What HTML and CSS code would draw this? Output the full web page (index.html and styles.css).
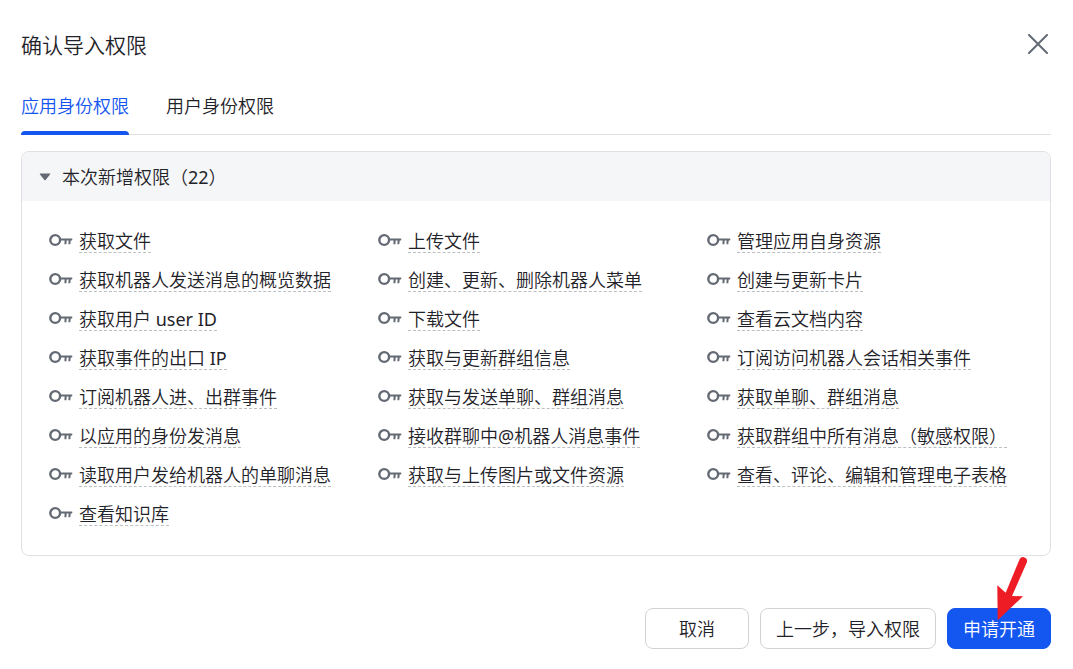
FILE: index.html
```html
<!DOCTYPE html>
<html lang="zh-CN">
<head>
    <meta charset="UTF-8">
    <meta name="viewport" content="width=device-width, initial-scale=1.0">
    <title>确认导入权限</title>
    <link rel="stylesheet" href="styles.css">
</head>
<body>
    <svg class="sprite" aria-hidden="true">
        <symbol id="key" viewBox="0 0 24 14">
            <circle cx="6.2" cy="7" r="4.9" fill="none" stroke="currentColor" stroke-width="2.4"/>
            <path d="M11 5.4H22.6Q23.6 5.4 23.4 6.3L23 7.6H21.7L21.3 11.2H19.4L19.6 7.6H17.7L17.4 11.2H15.4L15.6 7.6H11Z" fill="currentColor"/>
        </symbol>
    </svg>

    <main class="dialog">
        <header class="dialog-header">
            <h1>确认导入权限</h1>
            <button type="button" class="close" aria-label="关闭">
                <svg width="20" height="20" viewBox="0 0 20 20"><path d="M1 1L19 19M19 1L1 19" stroke="currentColor" stroke-width="2" stroke-linecap="round"/></svg>
            </button>
        </header>

        <div class="tabs" role="tablist">
            <button type="button" class="tab active" role="tab" aria-selected="true">应用身份权限</button>
            <button type="button" class="tab" role="tab" aria-selected="false">用户身份权限</button>
        </div>

        <section class="panel">
            <button type="button" class="panel-header" aria-expanded="true">
                <svg width="12" height="8" viewBox="0 0 12 8"><path d="M1.2 .5H10.8Q11.6 .7 11 1.4L6.6 7Q6 7.6 5.4 7L1 1.4Q.4 .7 1.2 .5Z" fill="currentColor"/></svg>
                <span>本次新增权限（<span class="latin">22</span>）</span>
            </button>
            <ul class="scopes">
                <li><svg class="key"><use href="#key"/></svg><span class="name">获取文件</span></li>
                <li><svg class="key"><use href="#key"/></svg><span class="name">上传文件</span></li>
                <li><svg class="key"><use href="#key"/></svg><span class="name">管理应用自身资源</span></li>
                <li><svg class="key"><use href="#key"/></svg><span class="name">获取机器人发送消息的概览数据</span></li>
                <li><svg class="key"><use href="#key"/></svg><span class="name">创建、更新、删除机器人菜单</span></li>
                <li><svg class="key"><use href="#key"/></svg><span class="name">创建与更新卡片</span></li>
                <li><svg class="key"><use href="#key"/></svg><span class="name">获取用户 <span class="latin">user ID</span></span></li>
                <li><svg class="key"><use href="#key"/></svg><span class="name">下载文件</span></li>
                <li><svg class="key"><use href="#key"/></svg><span class="name">查看云文档内容</span></li>
                <li><svg class="key"><use href="#key"/></svg><span class="name">获取事件的出口 <span class="latin">IP</span></span></li>
                <li><svg class="key"><use href="#key"/></svg><span class="name">获取与更新群组信息</span></li>
                <li><svg class="key"><use href="#key"/></svg><span class="name">订阅访问机器人会话相关事件</span></li>
                <li><svg class="key"><use href="#key"/></svg><span class="name">订阅机器人进、出群事件</span></li>
                <li><svg class="key"><use href="#key"/></svg><span class="name">获取与发送单聊、群组消息</span></li>
                <li><svg class="key"><use href="#key"/></svg><span class="name">获取单聊、群组消息</span></li>
                <li><svg class="key"><use href="#key"/></svg><span class="name">以应用的身份发消息</span></li>
                <li><svg class="key"><use href="#key"/></svg><span class="name">接收群聊中<span class="latin">@</span>机器人消息事件</span></li>
                <li><svg class="key"><use href="#key"/></svg><span class="name">获取群组中所有消息（敏感权限）</span></li>
                <li><svg class="key"><use href="#key"/></svg><span class="name">读取用户发给机器人的单聊消息</span></li>
                <li><svg class="key"><use href="#key"/></svg><span class="name">获取与上传图片或文件资源</span></li>
                <li><svg class="key"><use href="#key"/></svg><span class="name">查看、评论、编辑和管理电子表格</span></li>
                <li><svg class="key"><use href="#key"/></svg><span class="name">查看知识库</span></li>
            </ul>
        </section>

        <footer class="dialog-footer">
            <button type="button" class="btn">取消</button>
            <button type="button" class="btn">上一步，导入权限</button>
            <div class="submit">
                <button type="button" class="btn primary">申请开通</button>
                <svg class="pointer" viewBox="0 0 34 68" aria-hidden="true"><path d="M24.7 4A4 4 0 0 1 32 7L17 41L28 41.3L2.7 65.3L2.3 30.3L10.7 37.7Z" fill="#ee1c25"/></svg>
            </div>
        </footer>
    </main>
</body>
</html>
```
FILE: styles.css
```css
* {
    box-sizing: border-box;
}
body {
    margin: 0;
    background: #fff;
    color: #1f2329;
    font-family: "Noto Sans", "Noto Sans CJK SC", sans-serif;
    font-size: 18px;
    font-weight: 350;
    line-height: 24px;
}
button {
    padding: 0;
    border: none;
    background: none;
    color: inherit;
    font: inherit;
    cursor: pointer;
}
svg {
    display: block;
    flex: none;
}
.sprite {
    position: absolute;
    width: 0;
    height: 0;
}
/* latin letters look too thin next to the chinese ones */
.latin {
    font-weight: 400;
}
.dialog {
    padding: 29px 22px 20px 21px;
}
.dialog-header {
    display: flex;
    justify-content: space-between;
    align-items: flex-start;
}
h1 {
    margin: 0;
    font-size: 21px;
    font-weight: 350;
    line-height: 32px;
}
.close {
    padding: 5px 3px;
    color: #646a73;
}
.tabs {
    display: flex;
    align-items: flex-start;
    gap: 37px;
    margin-top: 33px;
    border-bottom: 1px solid #dee0e3;
}
.tab.active {
    margin-bottom: -1px;
    color: #1456f0;
}
.tab.active::after {
    content: "";
    display: block;
    height: 4px;
    margin-top: 13px;
    border-radius: 4px 4px 0 0;
    background: #1456f0;
}
.panel {
    margin-top: 16px;
    border: 1px solid #dee0e3;
    border-radius: 8px;
    overflow: hidden;
}
.panel-header {
    display: flex;
    align-items: center;
    gap: 11px;
    width: 100%;
    height: 49px;
    padding: 0 17px;
    background: #f5f6f7;
}
.panel-header svg {
    color: #646a73;
}
.scopes {
    display: grid;
    grid-template-columns: repeat(3, 1fr);
    gap: 17px 13px;
    margin: 0;
    padding: 30px 27px 29px;
    list-style: none;
}
.scopes li {
    display: flex;
    gap: 6px;
    white-space: nowrap;
}
.name {
    border-bottom: 1px dashed #bbbfc4;
    line-height: 21px;
}
.key {
    width: 24px;
    height: 14px;
    margin-top: 2px;
    color: #646a73;
}
.dialog-footer {
    display: flex;
    justify-content: flex-end;
    gap: 11px;
    margin-top: 52px;
}
.btn {
    min-width: 104px;
    height: 41px;
    padding: 0 15px;
    border: 1px solid #d0d3d6;
    border-radius: 8px;
}
.btn.primary {
    border-color: #1456f0;
    background: #1456f0;
    color: #fff;
}
.submit {
    position: relative;
}
/* arrow lies over the submit button */
.pointer {
    position: absolute;
    top: -53px;
    left: 48px;
    width: 34px;
    height: 68px;
    pointer-events: none;
}
```
